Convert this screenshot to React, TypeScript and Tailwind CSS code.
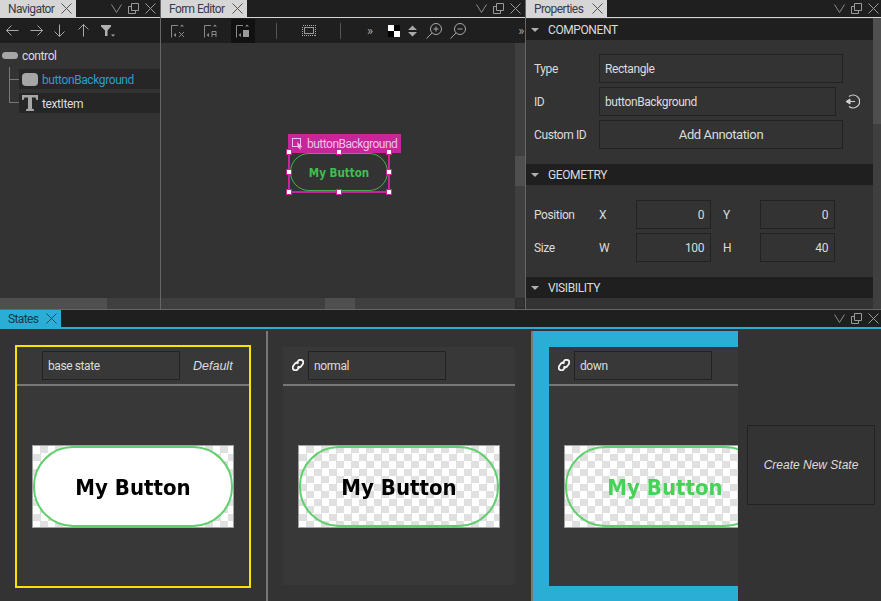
import type { ReactNode } from 'react';

const ui = "font-['Roboto',sans-serif] tracking-[-0.4px]";

const Svg = ({ w, h, children, className = '' }: { w: number; h: number; children: ReactNode; className?: string }) => (
    <svg width={w} height={h} viewBox={`0 0 ${w} ${h}`} fill="none" className={`shrink-0 ${className}`}>
        {children}
    </svg>
);

const CloseX = ({ color }: { color: string }) => (
    <Svg w={11} h={11}>
        <path d="M0.5 0.5L10.5 10.5M10.5 0.5L0.5 10.5" stroke={color} />
    </Svg>
);

const WindowControls = ({ tight }: { tight?: boolean }) => (
    <div className={`ml-auto flex items-center gap-[6px] ${tight ? 'pr-[2px]' : 'pr-[4px]'}`}>
        <Svg w={11} h={9}>
            <path d="M0.5 0.5L5.5 8.5L10.5 0.5" stroke="#8a8a8a" />
        </Svg>
        <Svg w={11} h={11}>
            <path d="M3.5 3.5H0.5V10.5H7.5V7.5M3.5 0.5H10.5V7.5H3.5Z" stroke="#9a9a9a" />
        </Svg>
        <CloseX color="#9a9a9a" />
    </div>
);

const Tab = ({ title, width, active }: { title: string; width: string; active?: boolean }) => (
    <div className={`flex h-full items-center justify-between pl-[8px] pr-[4px] ${width} ${active ? 'bg-[#2aaed6] text-[#123a4a]' : 'bg-[#d6d6d6] text-[#3a3a4a]'}`}>
        <span className="text-[12px] leading-none tracking-[-0.6px]">{title}</span>
        <CloseX color={active ? '#1c4a5c' : '#555'} />
    </div>
);

const TabBar = ({ title, width, active, tight }: { title: string; width: string; active?: boolean; tight?: boolean }) => (
    <div className={`flex shrink-0 items-stretch bg-[#1f1f1f] ${active ? 'h-[19px] border-b-2 border-[#2aaed6]' : 'h-[18px] border-b border-[#d6d6d6]'}`}>
        <Tab title={title} width={width} active={active} />
        <WindowControls tight={tight} />
    </div>
);

const Arrow = ({ d }: { d: string }) => (
    <Svg w={13} h={13}>
        <path d={d} stroke="#a8a8a8" />
    </Svg>
);

const AlignIcon = ({ glyph }: { glyph: ReactNode }) => (
    <Svg w={14} h={14}>
        <path d="M0.5 13.5V1.5H7" stroke="#8a8a8a" />
        <path d="M9 2.5L11 0.5L13 2.5Z M2.5 11L5 9V13Z" fill="#8a8a8a" />
        {glyph}
    </Svg>
);

const Scroller = ({ className, thumb }: { className: string; thumb: string }) => (
    <div className={`relative shrink-0 bg-[#3f3f3f] ${className}`}>
        <div className={`absolute bg-[#4f4f4f] ${thumb}`} />
    </div>
);

const Navigator = () => (
    <div className="flex w-[160px] shrink-0 flex-col">
        <TabBar title="Navigator" width="w-[76px]" />
        <div className="flex h-[25px] shrink-0 items-center gap-[10.7px] bg-[#1f1f1f] pl-[6px]">
            <Arrow d="M12.5 6.5H0.5M5.5 1.5L0.5 6.5L5.5 11.5" />
            <Arrow d="M0.5 6.5H12.5M7.5 1.5L12.5 6.5L7.5 11.5" />
            <Arrow d="M6.5 0.5V12.5M1.5 7.5L6.5 12.5L11.5 7.5" />
            <Arrow d="M6.5 12.5V0.5M1.5 5.5L6.5 0.5L11.5 5.5" />
            <Svg w={14} h={12}>
                <path d="M0 0H10V1.5L6.5 5.5V11H4V5.5L0 1.5Z" fill="#b0b0b0" />
                <path d="M10 9.5H14L12 11.5Z" fill="#b0b0b0" />
            </Svg>
        </div>
        <div className="relative flex flex-1 flex-col bg-[#333333] text-[12px] text-[#dcdcdc]">
            <div className="flex h-[22px] items-center gap-[4px] pl-[2px] pt-[3px]">
                <div className="h-[7px] w-[16px] rounded-[4px] bg-[#a6a6a6]" />
                <span>control</span>
            </div>
            <div className="relative ml-[19px] mt-[4px] flex h-[20px] items-center gap-[4px] bg-[#262626] pl-[3px] text-[#2a9fc4]">
                <div className="h-[13px] w-[16px] rounded-[4px] bg-[#a6a6a6]" />
                <span className="pt-px">buttonBackground</span>
            </div>
            <div className="relative ml-[19px] mt-[4px] flex h-[20px] items-center gap-[4px] bg-[#262626] pl-[3px]">
                <Svg w={16} h={16}>
                    <path d="M0 0H16V5H14.5L13.5 2.5H10V13.5L12 14.5V16H4V14.5L6 13.5V2.5H2.5L1.5 5H0Z" fill="#a6a6a6" />
                </Svg>
                <span className="pt-px">textItem</span>
            </div>
            <div className="absolute left-[9px] top-[24px] h-[36px] w-[10px] border-b border-l border-[#777]" />
            <div className="absolute left-[9px] top-[36px] h-px w-[10px] bg-[#777]" />
            <Scroller className="mt-auto h-[11px]" thumb="left-0 top-0 h-full w-[107px]" />
        </div>
    </div>
);

const FormEditor = () => (
    <div className="flex w-[364px] shrink-0 flex-col">
        <TabBar title="Form Editor" width="w-[86px]" />
        <div className="relative flex h-[25px] shrink-0 items-center bg-[#1f1f1f] pl-[10px] text-[#a8a8a8]">
            <AlignIcon glyph={<path d="M8 8L13 13M13 8L8 13" stroke="#8a8a8a" />} />
            <div className="ml-[19px]">
                <AlignIcon glyph={<path d="M8 13V7.5H12V13M8 10.5H12" stroke="#8a8a8a" />} />
            </div>
            <div className="ml-[13px] flex h-[24px] w-[24px] items-center justify-center bg-[#111111]">
                <AlignIcon glyph={<rect x="7" y="6" width="6" height="7" fill="#9a9a9a" />} />
            </div>
            <div className="ml-[21px] h-[16px] w-px bg-[#555]" />
            <div className="ml-[25px]">
                <Svg w={14} h={11}>
                    <rect x="0.5" y="0.5" width="13" height="10" stroke="#aaa" strokeDasharray="1 1" shapeRendering="crispEdges" />
                    <rect x="2.5" y="2.5" width="9" height="6" stroke="#999" shapeRendering="crispEdges" />
                </Svg>
            </div>
            <div className="ml-[24px] h-[16px] w-px bg-[#555]" />
            <span className="ml-[26px] text-[13px] leading-none">»</span>
            <div className="ml-[15px] grid h-[12px] w-[12px] grid-cols-2 bg-black">
                <div className="bg-white" />
                <div />
                <div />
                <div className="bg-white" />
            </div>
            <div className="ml-[8px]">
                <Svg w={9} h={12}>
                    <path d="M0 5L4.5 0.5L9 5ZM0 7L4.5 11.5L9 7Z" fill="#a8a8a8" />
                </Svg>
            </div>
            <div className="ml-[9px]">
                <Svg w={16} h={16}>
                    <circle cx="10" cy="6" r="5.5" stroke="#a8a8a8" />
                    <path d="M6 10L0.5 15.5M7.5 6H12.5M10 3.5V8.5" stroke="#a8a8a8" />
                </Svg>
            </div>
            <div className="ml-[8px]">
                <Svg w={16} h={16}>
                    <circle cx="10" cy="6" r="5.5" stroke="#a8a8a8" />
                    <path d="M6 10L0.5 15.5M7.5 6H12.5" stroke="#a8a8a8" />
                </Svg>
            </div>
            <span className="ml-auto pr-[1px] text-[13px] leading-none">»</span>
        </div>
        <div className="flex min-h-0 flex-1">
            <div className="relative flex-1 bg-[#333333]">
                <SelectedItem />
            </div>
            <Scroller className="w-[10px]" thumb="left-0 top-[113px] h-[30px] w-full" />
        </div>
        <div className="flex h-[11px] shrink-0">
            <Scroller className="flex-1" thumb="left-[164px] top-0 h-full w-[30px]" />
            <div className="w-[10px] border border-[#2a2a2a] bg-[#333333]" />
        </div>
    </div>
);

const Handle = ({ className }: { className: string }) => (
    <div className={`absolute h-[6px] w-[6px] border border-[#d0209a] bg-white ${className}`} />
);

const SelectedItem = () => (
    <div className="absolute left-[127px] top-[108px] h-[42px] w-[102px] border-2 border-[#c9259b]">
        <div className="absolute -left-[2px] -top-[19px] flex h-[19px] w-[113px] items-center gap-[4px] bg-[#c9259b] pl-[4px] text-[12px] tracking-[-0.5px] text-[#eec2e2]">
            <Svg w={11} h={12}>
                <rect x="0.5" y="0.5" width="8" height="8" stroke="#eec2e2" />
                <path d="M5 4L10.5 9L8 9.5L9 12L6 9.5Z" fill="#eec2e2" />
            </Svg>
            <span>buttonBackground</span>
        </div>
        <div className="flex h-full items-center justify-center rounded-[19px] border border-[#45b04f] pt-[3px] font-['DejaVu_Sans_Condensed','DejaVu_Sans',sans-serif] text-[11.5px] font-bold tracking-normal text-[#3fbf4f]">
            My Button
        </div>
        <Handle className="-left-[4px] -top-[4px]" />
        <Handle className="left-[46px] -top-[4px]" />
        <Handle className="-right-[4px] -top-[4px]" />
        <Handle className="-left-[4px] top-[16px]" />
        <Handle className="-right-[4px] top-[16px]" />
        <Handle className="-bottom-[4px] -left-[4px]" />
        <Handle className="-bottom-[4px] left-[46px]" />
        <Handle className="-bottom-[4px] -right-[4px]" />
    </div>
);

const Section = ({ title, className = '' }: { title: string; className?: string }) => (
    <div className={`flex h-[21px] shrink-0 items-center bg-[#1f1f1f] pl-[5px] text-[12px] text-[#dcdcdc] ${className}`}>
        <div className="h-0 w-0 border-x-[4px] border-t-[4px] border-x-transparent border-t-[#b0b0b0]" />
        <span className="ml-[9px]">{title}</span>
    </div>
);

const Field = ({ className, children }: { className: string; children: ReactNode }) => (
    <div className={`flex h-[29px] shrink-0 items-center border border-[#222222] text-[12px] text-[#dcdcdc] ${className}`}>
        {children}
    </div>
);

const Label = ({ className, children }: { className: string; children: ReactNode }) => (
    <span className={`shrink-0 text-[12px] text-[#dcdcdc] ${className}`}>{children}</span>
);

const GeometryRow = ({ className, label, a, av, b, bv }: { className: string; label: string; a: string; av: string; b: string; bv: string }) => (
    <div className={`flex items-center pl-[8px] ${className}`}>
        <Label className="w-[65px]">{label}</Label>
        <Label className="w-[37px]">{a}</Label>
        <Field className="w-[75px] justify-end pr-[6px]">{av}</Field>
        <Label className="ml-[12px] w-[37px]">{b}</Label>
        <Field className="w-[75px] justify-end pr-[6px]">{bv}</Field>
    </div>
);

const Properties = () => (
    <div className="flex min-w-0 flex-1 flex-col">
        <TabBar title="Properties" width="w-[81px]" tight />
        <div className="flex min-h-0 flex-1">
            <div className="flex flex-1 flex-col bg-[#333333] pt-px">
                <Section title="COMPONENT" />
                <div className="mt-[14px] flex items-center pl-[8px]">
                    <Label className="w-[65px]">Type</Label>
                    <Field className="w-[244px] pl-[5px] pt-px">Rectangle</Field>
                </div>
                <div className="mt-[4px] flex items-center pl-[8px]">
                    <Label className="w-[65px]">ID</Label>
                    <Field className="w-[237px] pl-[5px]">buttonBackground</Field>
                    <div className="ml-[9px]">
                        <Svg w={15} h={15}>
                            <path d="M4 2.5A6.5 6.5 0 1 1 4 12.5" stroke="#d0d0d0" strokeWidth="1.2" />
                            <path d="M1 7.5H10M1 7.5L5 5V10Z" stroke="#d0d0d0" fill="#d0d0d0" />
                        </Svg>
                    </div>
                </div>
                <div className="mt-[4px] flex items-center pl-[8px]">
                    <Label className="w-[65px]">Custom ID</Label>
                    <Field className="w-[244px] justify-center text-[13px]">Add Annotation</Field>
                </div>
                <Section title="GEOMETRY" className="mt-[15px]" />
                <GeometryRow className="mt-[15px]" label="Position" a="X" av="0" b="Y" bv="0" />
                <GeometryRow className="mt-[4px]" label="Size" a="W" av="100" b="H" bv="40" />
                <Section title="VISIBILITY" className="mt-[15px]" />
            </div>
            <Scroller className="w-[8px]" thumb="left-0 top-0 h-[106px] w-full" />
        </div>
    </div>
);

const Thumbnail = ({ filled, textColor }: { filled?: boolean; textColor: string }) => (
    <div className="ml-[15px] mt-[59px] h-[83px] w-[202px] shrink-0 border border-[#a0a0a0] bg-white bg-[repeating-conic-gradient(#e0e0e0_0_25%,#ffffff_0_50%)] bg-[length:15px_15px]">
        <div className={`flex h-full items-center justify-center rounded-[40px] border-[2.5px] border-[#62cf6e] pt-[2px] font-['DejaVu_Sans_Condensed','DejaVu_Sans',sans-serif] text-[22px] font-bold tracking-normal blur-[0.6px] ${filled ? 'bg-white' : ''} ${textColor}`}>
            My Button
        </div>
    </div>
);

const StateHeader = ({ name, linked }: { name: string; linked?: boolean }) => (
    <div className="flex h-[39px] shrink-0 items-start border-b-2 border-[#777777] pt-[4px]">
        {linked ? (
            <div className="ml-[9px] mt-[8px] w-[16px]">
                <Svg w={12} h={12}>
                    <path d="M5 3.5L6.5 1.5C7.5 0.5 9.5 0.5 10.5 1.5C11.5 2.5 11.5 4 10.5 5.5L9 7.5C8 8.5 6.5 8.5 5.5 7.5" stroke="#f4f4f4" strokeWidth="1.8" />
                    <path d="M7 8.5L5.5 10.5C4.5 11.5 2.5 11.5 1.5 10.5C0.5 9.5 0.5 8 1.5 6.5L3 4.5C4 3.5 5.5 3.5 6.5 4.5" stroke="#f4f4f4" strokeWidth="1.8" />
                </Svg>
            </div>
        ) : (
            <div className="w-[25px]" />
        )}
        <Field className="w-[138px] pl-[5px]">{name}</Field>
        {!linked && <span className="ml-[13px] mt-[6px] font-['Liberation_Sans',sans-serif] text-[12.5px] italic tracking-normal text-[#dcdcdc]">Default</span>}
    </div>
);

const States = () => (
    <div className="flex min-h-0 flex-1 flex-col">
        <TabBar title="States" width="w-[61px]" active tight />
        <div className="flex min-h-0 flex-1 bg-[#333333] pt-[2px]">
            <div className="w-[266px] shrink-0 pl-[15px] pt-[14px]">
                <div className="flex h-[243px] w-[236px] flex-col border-2 border-[#ffe100] bg-[#383838]">
                    <StateHeader name="base state" />
                    <Thumbnail filled textColor="text-black" />
                </div>
            </div>
            <div className="w-[265px] shrink-0 border-l-2 border-[#777777] pl-[15px] pt-[16px]">
                <div className="flex h-[238px] w-[232px] flex-col bg-[#383838]">
                    <StateHeader name="normal" linked />
                    <Thumbnail textColor="text-black" />
                </div>
            </div>
            <div className="w-[207px] shrink-0 overflow-hidden border-l-2 border-[#777777] bg-[#2aaed6] pl-[16px] pt-[16px]">
                <div className="flex h-[239px] w-[232px] flex-col bg-[#383838]">
                    <StateHeader name="down" linked />
                    <Thumbnail textColor="text-[#45d257]" />
                </div>
            </div>
            <div className="flex-1 pl-[9px] pt-[94px]">
                <div className="flex h-[80px] w-[128px] items-center justify-center border border-[#222222] font-['Liberation_Sans',sans-serif] text-[12px] italic tracking-normal text-[#dcdcdc]">
                    Create New State
                </div>
            </div>
        </div>
    </div>
);

export default function App() {
    return (
        <div className={`flex h-[601px] w-[881px] flex-col overflow-hidden bg-[#333333] ${ui}`}>
            <div className="flex h-[310px] shrink-0 border-b border-[#666666]">
                <Navigator />
                <div className="w-px shrink-0 bg-[#666666]" />
                <FormEditor />
                <div className="w-px shrink-0 bg-[#666666]" />
                <Properties />
            </div>
            <States />
        </div>
    );
}
